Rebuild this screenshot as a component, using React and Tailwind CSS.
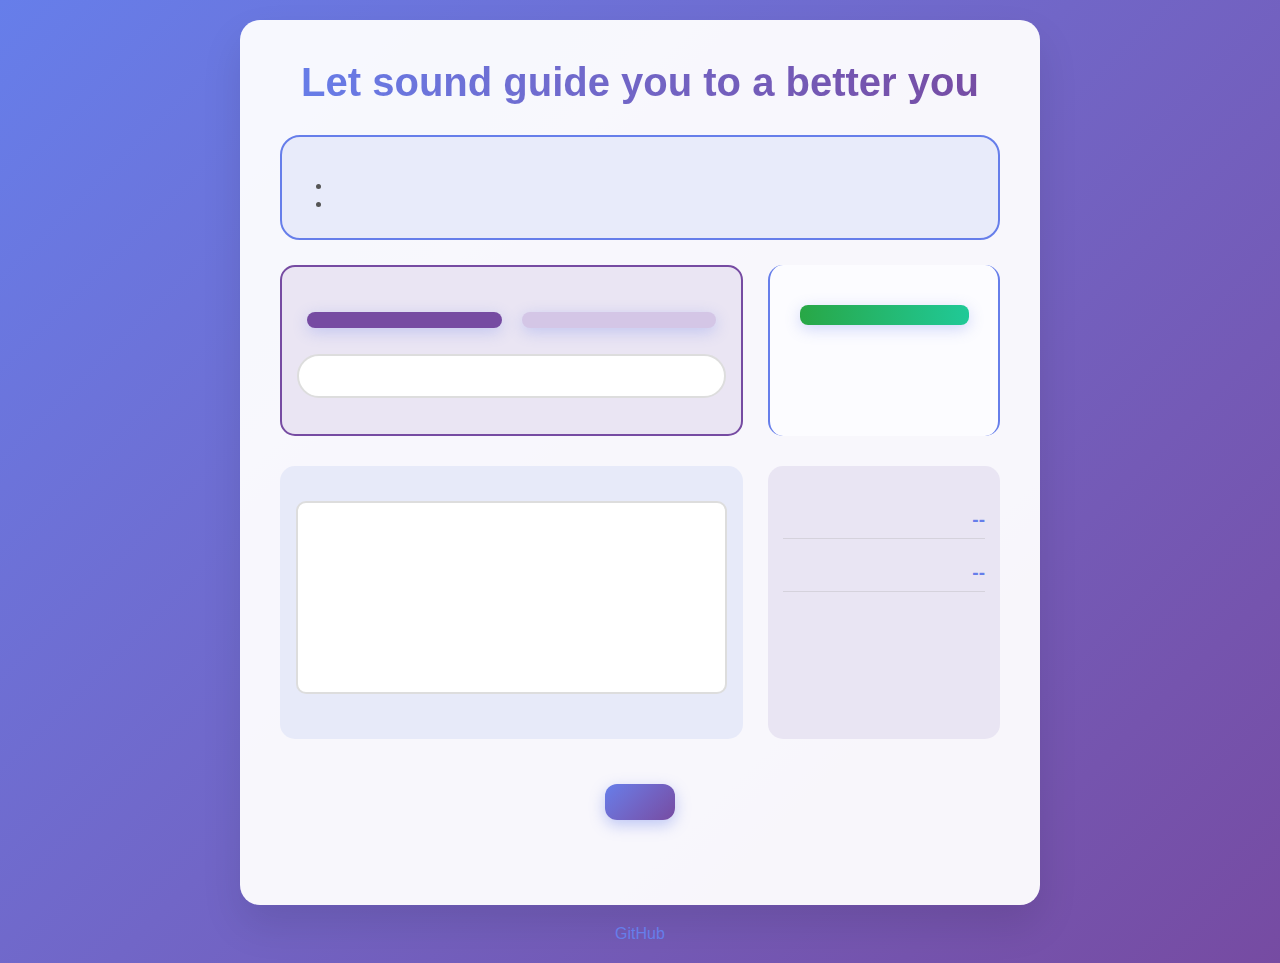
export default function App() {
  const font = { fontFamily: '"Liberation Sans", Arial, sans-serif' };
  return (
    <div
      className="min-h-screen bg-linear-135 from-[#667eea] to-[#764ba2] px-5 pt-5 pb-5"
      style={font}
    >
      <div className="mx-auto max-w-[800px] rounded-[20px] bg-white/95 p-10 shadow-[0_20px_40px_rgba(0,0,0,0.1)]">
        {/* Title */}
        <h1 className="mb-[31px] bg-linear-to-r from-[#667eea] to-[#764ba2] bg-clip-text text-center text-[40px] font-bold leading-[44px] text-transparent">
          Let sound guide you to a better you
        </h1>

        {/* Info box */}
        <div className="mb-[25px] rounded-[20px] border-2 border-[#667eea] bg-[#e8ebfa] px-5 pt-[40px] pb-[25px]">
          <ul className="list-disc pl-[30px] text-[15px] leading-[18px] text-[#555]">
            <li></li>
            <li></li>
          </ul>
        </div>

        {/* Controls row */}
        <div className="mb-[30px] grid grid-cols-[2fr_1fr] gap-[25px]">
          <div className="rounded-[15px] border-2 border-[#764ba2] bg-[#eae5f3] px-[15px] pt-[45px] pb-[36px]">
            <div className="mx-[10px] flex gap-5">
              <button className="h-4 flex-1 rounded-lg bg-[#764ba2] shadow-[0_4px_15px_rgba(102,126,234,0.3)]"></button>
              <button className="h-4 flex-1 rounded-lg bg-[#d4c6e6] shadow-[0_4px_15px_rgba(102,126,234,0.3)]"></button>
            </div>
            <input
              className="mt-[26px] block h-[44px] w-full rounded-full border-2 border-[#ddd] bg-white px-4 outline-none"
              type="text"
            />
          </div>
          <div className="rounded-[15px] border-x-2 border-[#667eea] bg-[#fcfcff] pl-[30px] pr-[29px] pt-[40px]">
            <button className="block h-5 w-full rounded-lg bg-linear-to-r from-[#28a745] to-[#20c997] shadow-[0_4px_15px_rgba(102,126,234,0.3)]"></button>
          </div>
        </div>

        {/* Visual + stats row */}
        <div className="mb-[45px] grid grid-cols-[2fr_1fr] gap-[25px]">
          <div className="rounded-[15px] bg-[#e7eaf9] px-4 pt-[35px] pb-[45px]">
            <div className="h-[193px] rounded-[10px] border-2 border-[#ddd] bg-white"></div>
          </div>
          <div className="rounded-[15px] bg-[#e9e5f3] px-[15px] pt-[20px]">
            <div className="flex items-center justify-between border-b border-[#d5d2dc] pt-[23px] pb-[7px] leading-[22px]">
              <span></span>
              <span className="text-[19px] font-bold text-[#667eea]">--</span>
            </div>
            <div className="flex items-center justify-between border-b border-[#d5d2dc] pt-[23px] pb-[7px] leading-[22px]">
              <span></span>
              <span className="text-[19px] font-bold text-[#667eea]">--</span>
            </div>
          </div>
        </div>

        {/* Action */}
        <div className="mb-[45px] flex justify-center">
          <button className="h-9 w-[70px] rounded-xl bg-linear-135 from-[#667eea] to-[#764ba2] shadow-[0_5px_15px_rgba(102,126,234,0.4)]"></button>
        </div>
      </div>

      <div className="mt-[17px] text-center">
        <a href="#" className="text-base text-[#667eea]">GitHub</a>
      </div>
    </div>
  );
}
